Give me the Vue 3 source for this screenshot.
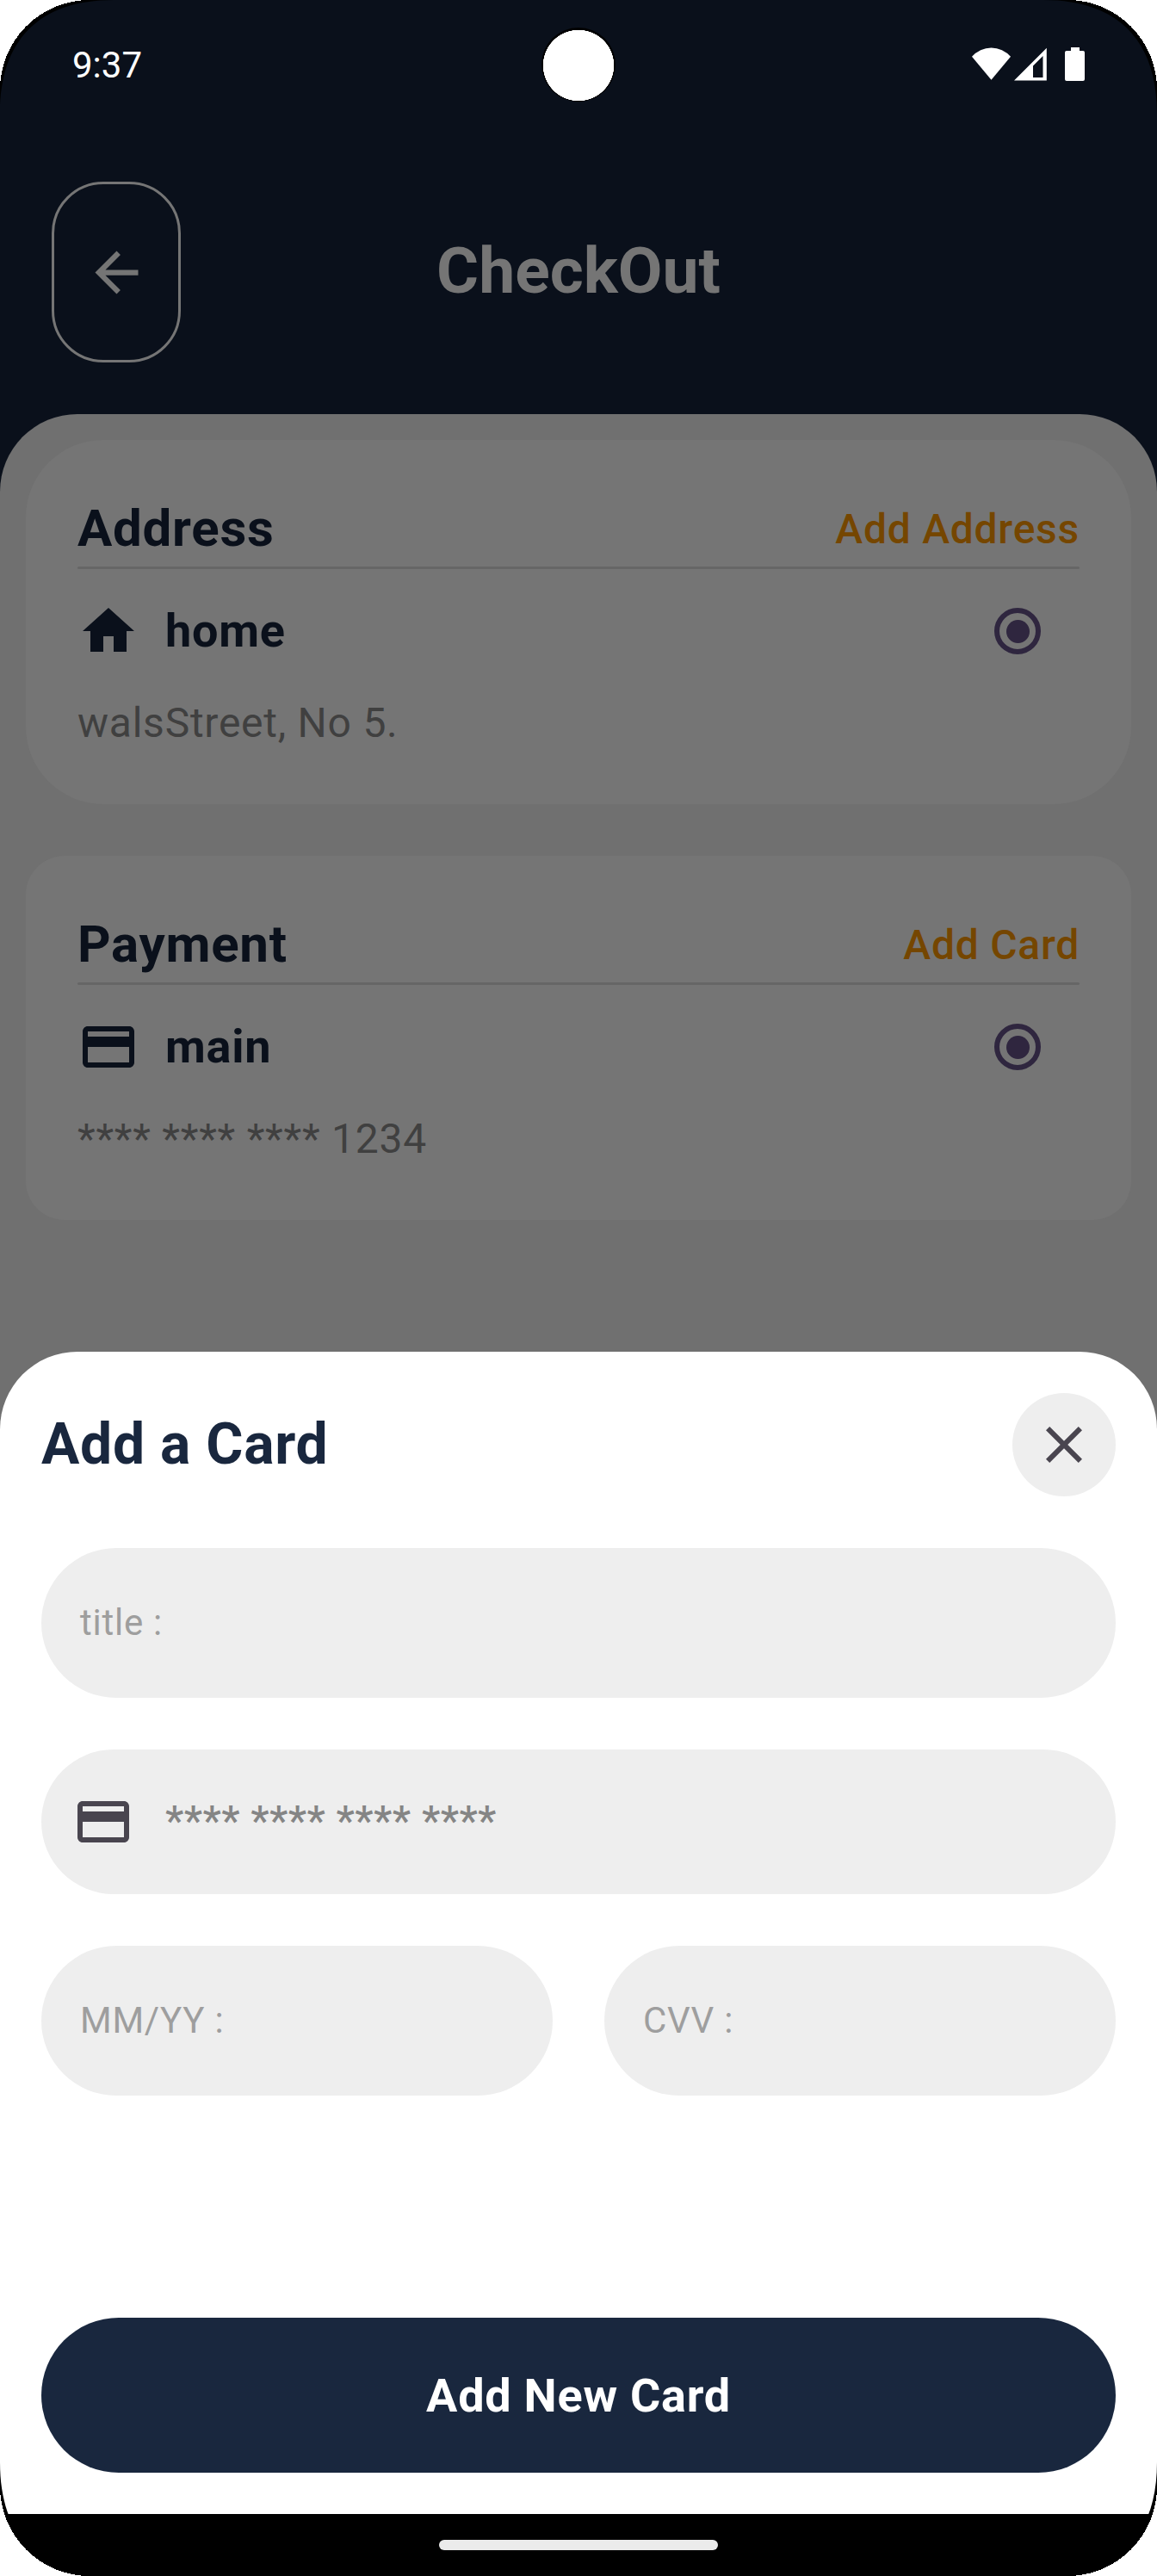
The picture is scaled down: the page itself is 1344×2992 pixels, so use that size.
<script setup>
const sections = [
  {
    id: 'address',
    title: 'Address',
    action: 'Add Address',
    name: 'home',
    detail: 'walsStreet, No 5.',
    icon: 'M10 20v-6h4v6h5v-8h3L12 3 2 12h3v8z',
  },
  {
    id: 'payment',
    title: 'Payment',
    action: 'Add Card',
    name: 'main',
    detail: '**** **** **** 1234',
    icon: 'M20 4H4c-1.11 0-1.99.89-1.99 2L2 18c0 1.11.89 2 2 2h16c1.11 0 2-.89 2-2V6c0-1.11-.89-2-2-2zm0 14H4v-6h16v6zm0-10H4V6h16v2z',
  },
]
const cardIcon = sections[1].icon
</script>

<template>
  <div class="device">
    <div class="screen">
      <div class="status">
        <span class="clock">9:37</span>
        <svg class="status-icons" width="131" height="39" viewBox="0 0 131 39" fill="#fff">
          <path d="M0 10.800A29.700 29.700 0 0 1 45 10.800L22.500 37.800z" />
          <path fill-rule="evenodd" d="M86.800 .8V38.400H49zM82.500 10L71 21.500V35H82.500z" />
          <path d="M115 0h10v4h4q2 0 2 2V37q0 2-2 2h-19q-2 0-2-2V6q0-2 2-2h5z" />
        </svg>
      </div>
      <header class="header">
        <button class="back" aria-label="Back">
          <svg width="75" height="75" viewBox="0 0 24 24" fill="#757575">
            <path d="M20 11H7.83l5.59-5.59L12 4l-8 8 8 8 1.41-1.41L7.83 13H20v-2z" />
          </svg>
        </button>
        <h1>CheckOut</h1>
      </header>
      <main class="content">
        <section v-for="s in sections" :key="s.id" class="card" :class="s.id">
          <div class="card-head">
            <h2>{{ s.title }}</h2>
            <span class="action">{{ s.action }}</span>
          </div>
          <div class="rule"></div>
          <div class="item">
            <svg width="72" height="72" viewBox="0 0 24 24" fill="#0a101b"><path :d="s.icon" /></svg>
            <span class="name">{{ s.name }}</span>
            <span class="radio"><i></i></span>
          </div>
          <div class="detail">{{ s.detail }}</div>
        </section>
      </main>
    </div>

    <div class="camera"></div>

    <div class="sheet">
      <div class="sheet-head">
        <h2>Add a Card</h2>
        <button class="close" aria-label="Close">
          <svg width="72" height="72" viewBox="0 0 24 24" fill="#49454f">
            <path d="M19 6.41L17.59 5 12 10.59 6.41 5 5 6.41 10.59 12 5 17.59 6.41 19 12 13.41 17.59 19 19 17.59 13.41 12z" />
          </svg>
        </button>
      </div>
      <div class="field">title :</div>
      <div class="field number">
        <svg width="72" height="72" viewBox="0 0 24 24" fill="#49454f"><path :d="cardIcon" /></svg>
        <span>**** **** **** ****</span>
      </div>
      <div class="pair">
        <div class="field">MM/YY :</div>
        <div class="field">CVV :</div>
      </div>
      <button class="submit">Add New Card</button>
    </div>
    <div class="nav"><div class="pill"></div></div>

    <svg class="corners" width="1344" height="2992" viewBox="0 0 1344 2992">
      <path fill="#000" fill-rule="evenodd" d="M0 0H1344V2992H0zM132 0C46 0 0 46 0 132V2860C0 2946 46 2992 132 2992H1212C1298 2992 1344 2946 1344 2860V132C1344 46 1298 0 1212 0z" />
      <path fill="#fff" fill-rule="evenodd" shape-rendering="crispEdges" d="M0 0H1344V2992H0zM104 0A104 104 0 0 0 0 104V2888A104 104 0 0 0 104 2992H1240A104 104 0 0 0 1344 2888V104A104 104 0 0 0 1240 0z" />
    </svg>
  </div>
</template>

<style>
body {
  margin: 0;
  background: #fff;
}
</style>

<style scoped>
.device {
  position: relative;
  width: 1344px;
  height: 2992px;
  overflow: hidden;
  font-family: Roboto, sans-serif;
  display: flex;
  flex-direction: column;
}
.device * {
  box-sizing: border-box;
}
h1,
h2 {
  margin: 0;
  font-weight: 700;
}
button {
  border: 0;
  padding: 0;
  background: none;
  font-family: inherit;
}
svg {
  display: block;
  flex: none;
}
.screen {
  flex: 1;
  display: flex;
  flex-direction: column;
  background: #0a101b;
}
.status {
  height: 151px;
  padding: 48px 84px 0;
  display: flex;
  justify-content: space-between;
  align-items: flex-start;
}
.status-icons {
  margin-top: 7px;
}
.clock {
  color: #fff;
  font-size: 42px;
  line-height: 56px;
}
.header {
  height: 330px;
  padding: 60px;
  display: grid;
  grid-template-columns: 150px 1fr 150px;
  align-items: center;
}
.back {
  width: 150px;
  height: 210px;
  border: 3px solid #757575;
  border-radius: 60px;
  display: flex;
  align-items: center;
  justify-content: center;
}
h1 {
  text-align: center;
  color: #757575;
  font-size: 75px;
  line-height: 87px;
  padding-bottom: 3px;
}
.content {
  flex: 1;
  background: #707070;
  border-radius: 90px 90px 0 0;
  padding: 30px;
  display: flex;
  flex-direction: column;
  gap: 60px;
}
.card {
  background: #757575;
  border-radius: 90px;
  padding: 60px;
}
.payment {
  border-radius: 45px;
}
.card-head {
  height: 87px;
  display: flex;
  justify-content: space-between;
  align-items: center;
}
.card-head h2 {
  color: #0a101b;
  font-size: 60px;
  line-height: 70px;
  letter-spacing: 0.75px;
  padding-bottom: 2px;
}
.action {
  color: #754600;
  font-size: 48px;
  font-weight: 500;
  line-height: 56px;
  letter-spacing: 0.75px;
}
.rule {
  height: 3px;
  border-radius: 2px;
  background: #666;
}
.item {
  height: 144px;
  display: flex;
  align-items: center;
}
.name {
  margin-left: 30px;
  color: #0a101b;
  font-size: 54px;
  font-weight: 700;
  line-height: 64px;
  letter-spacing: 0.75px;
}
.radio {
  margin-left: auto;
  margin-right: 45px;
  width: 54px;
  height: 54px;
  border: 6px solid #2f263f;
  border-radius: 50%;
  display: flex;
  align-items: center;
  justify-content: center;
}
.radio i {
  width: 27px;
  height: 27px;
  border-radius: 50%;
  background: #2f263f;
}
.detail {
  height: 69px;
  line-height: 69px;
  font-size: 48px;
  letter-spacing: 0.75px;
  color: #404040;
}
.camera {
  position: absolute;
  left: 629px;
  top: 32px;
  width: 86px;
  height: 86px;
  border-radius: 50%;
  background: radial-gradient(circle at 43px 44px, #fff 41px, #000 41.4px);
}
.sheet {
  position: absolute;
  left: 0;
  right: 0;
  bottom: 72px;
  height: 1350px;
  background: #fff;
  border-radius: 90px 90px 0 0;
  padding: 48px;
  display: flex;
  flex-direction: column;
  gap: 60px;
}
.sheet-head {
  height: 120px;
  display: flex;
  align-items: center;
  justify-content: space-between;
}
.sheet-head h2 {
  color: #19273e;
  font-size: 66px;
  line-height: 78px;
  letter-spacing: 0.75px;
}
.close {
  width: 120px;
  height: 120px;
  border-radius: 50%;
  background: #eee;
  display: flex;
  align-items: center;
  justify-content: center;
}
.field {
  height: 174px;
  border-radius: 90px;
  background: #eee;
  padding: 0 45px;
  display: flex;
  align-items: center;
  color: #9e9e9e;
  font-size: 42px;
  line-height: 50px;
  letter-spacing: 0.75px;
}
.number {
  height: 168px;
  padding-left: 36px;
  font-size: 48px;
  font-weight: 500;
  line-height: 56px;
  letter-spacing: 0.45px;
  color: #858585;
}
.number span {
  margin-left: 36px;
  padding-bottom: 3px;
}
.pair {
  display: grid;
  grid-template-columns: 1fr 1fr;
  gap: 60px;
}
.submit {
  margin-top: auto;
  height: 180px;
  border-radius: 90px;
  background: #19273e;
  color: #fff;
  font-size: 54px;
  font-weight: 700;
  letter-spacing: 0.75px;
}
.nav {
  position: absolute;
  left: 0;
  right: 0;
  bottom: 0;
  height: 72px;
  background: #000;
  display: flex;
  align-items: center;
  justify-content: center;
}
.pill {
  width: 324px;
  height: 12px;
  border-radius: 6px;
  background: #ebebeb;
}
.corners {
  position: absolute;
  left: 0;
  top: 0;
}
</style>
